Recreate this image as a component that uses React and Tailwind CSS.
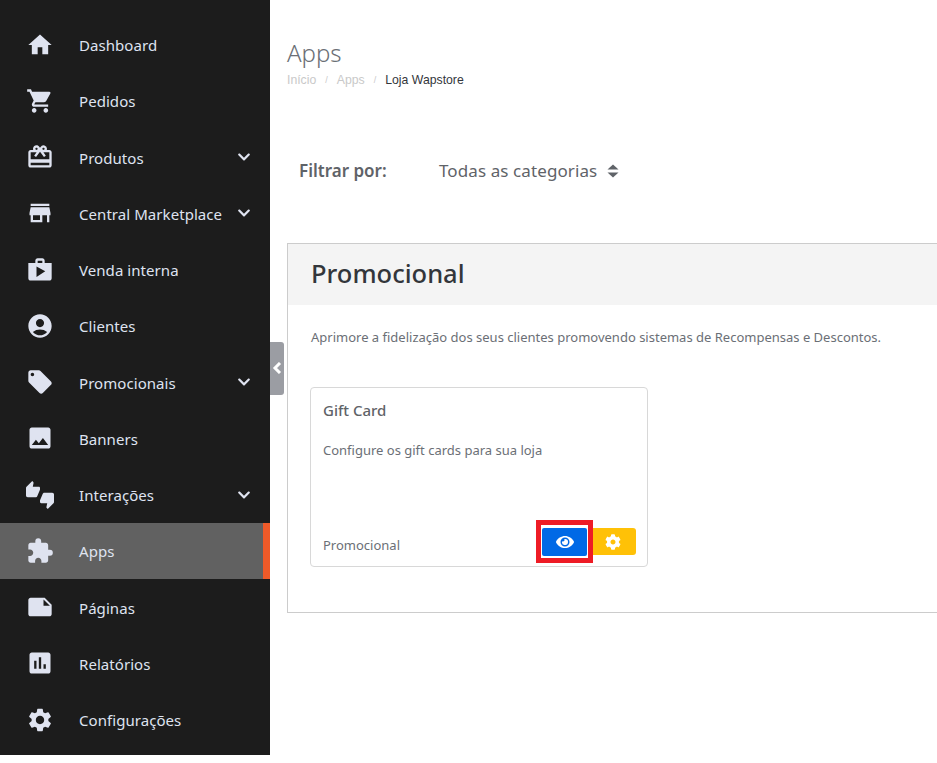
import {
  MdHome,
  MdShoppingCart,
  MdRedeem,
  MdStore,
  MdShop,
  MdAccountCircle,
  MdLocalOffer,
  MdImage,
  MdThumbsUpDown,
  MdExtension,
  MdNote,
  MdAssessment,
  MdSettings,
} from "react-icons/md";
import { FaChevronDown, FaEye, FaCog } from "react-icons/fa";

const menu = [
  { label: "Dashboard", icon: MdHome },
  { label: "Pedidos", icon: MdShoppingCart },
  { label: "Produtos", icon: MdRedeem, sub: true },
  { label: "Central Marketplace", icon: MdStore, sub: true },
  { label: "Venda interna", icon: MdShop },
  { label: "Clientes", icon: MdAccountCircle },
  { label: "Promocionais", icon: MdLocalOffer, sub: true },
  { label: "Banners", icon: MdImage },
  { label: "Interações", icon: MdThumbsUpDown, sub: true },
  { label: "Apps", icon: MdExtension, active: true },
  { label: "Páginas", icon: MdNote },
  { label: "Relatórios", icon: MdAssessment },
  { label: "Configurações", icon: MdSettings },
];

function MenuItem({ item }) {
  const Icon = item.icon;
  return (
    <div
      className={
        "flex items-center h-[56.25px] pl-[26px] text-[15px] text-[#dfe3f0] " +
        (item.active ? "bg-[#616161] border-r-[7px] border-[#ee5a29] pr-[12px]" : "pr-[19px]")
      }
    >
      <Icon className="w-[28px] h-[28px] shrink-0" />
      <span className="ml-[25px] pt-[1.45px] flex-1 whitespace-nowrap tracking-[0.06px]">{item.label}</span>
      {item.sub && <FaChevronDown className="w-[14px] h-[14px] shrink-0" />}
    </div>
  );
}

export default function App() {
  return (
    <div className="relative flex w-[937px] h-[763px] overflow-hidden bg-white font-['Noto_Sans',sans-serif]">
      {/* Sidebar */}
      <aside className="w-[270px] h-[755px] shrink-0 bg-[#1c1c1c] pt-[16.5px]">
        {menu.map((item) => (
          <MenuItem key={item.label} item={item} />
        ))}
      </aside>

      <div className="absolute left-[270px] top-[342px] w-[14px] h-[53px] bg-[#9b9da3] rounded-r-[3px] flex items-center justify-center text-white">
        <svg viewBox="0 0 10 12" className="w-[10px] h-[12px] -mt-[2px]" fill="none" stroke="currentColor" strokeWidth="3">
          <path d="M8 1 L3 6 L8 11" />
        </svg>
      </div>

      {/* Content */}
      <main className="flex-1 min-w-0 pl-[17px]">
        <h1 className="mt-[37px] text-[24px] leading-[32px] font-light text-[#6b6f76]">Apps</h1>
        <div className="mt-[3px] flex items-center text-[12.25px] leading-[16px] font-['Liberation_Sans',sans-serif]">
          <span className="text-[#c9c9c9]">Início</span>
          <span className="mx-[9px] text-[#c9c9c9] text-[9px]">/</span>
          <span className="text-[#c9c9c9]">Apps</span>
          <span className="mx-[9px] text-[#c9c9c9] text-[9px]">/</span>
          <span className="text-[#33363b]">Loja Wapstore</span>
        </div>

        <div className="mt-[69px] ml-[12px] flex items-center text-[#5f6368] h-[28px]">
          <span className="text-[17px] font-semibold w-[140px]">Filtrar por:</span>
          <span className="text-[17px] tracking-[0.1px]">Todas as categorias</span>
          <svg viewBox="0 0 12 14" className="ml-[10px] w-[12px] h-[14px]" fill="currentColor">
            <path d="M6 0.5 L11.5 5.5 H0.5 Z" />
            <path d="M0.5 8.5 H11.5 L6 13.5 Z" />
          </svg>
        </div>

        <section className="mt-[58px] w-[760px] h-[370px] border border-[#cccccc]">
          <div className="h-[61px] bg-[#f4f4f4] pl-[23px] flex items-center">
            <h2 className="text-[25.5px] -mt-[2px] font-medium text-[#33363b]">Promocional</h2>
          </div>
          <p className="mt-[22px] pl-[23px] text-[13px] leading-[20px] text-[#6b6f76]">
            Aprimore a fidelização dos seus clientes promovendo sistemas de Recompensas e Descontos.
          </p>

          <div className="mt-[40px] ml-[22px] w-[338px] h-[180px] border border-[#d8d8d8] rounded-[4px] flex flex-col px-[12px] pt-[11px] pb-[10px]">
            <h3 className="text-[15px] leading-[22px] font-medium text-[#5f6368]">Gift Card</h3>
            <p className="mt-[19px] text-[13px] leading-[20px] text-[#6b6f76]">Configure os gift cards para sua loja</p>
            <div className="mt-auto flex items-center justify-between">
              <span className="pt-[8px] text-[13px] text-[#6b6f76]">Promocional</span>
              <div className="flex items-start -mr-px">
                <div className="relative w-[45px] h-[28px] mr-[6px] bg-[#0069e6] rounded-[2px] flex items-center justify-center text-white">
                  <FaEye className="w-[18px] h-[16px]" />
                  <span className="absolute left-[-6px] top-[-8px] w-[57px] h-[43px] border-[5px] border-[#ee1c25]" />
                </div>
                <div className="w-[43px] h-[27px] pr-[3px] bg-[#ffc107] rounded-r-[3px] flex items-center justify-center text-white">
                  <FaCog className="w-[16px] h-[16px]" />
                </div>
              </div>
            </div>
          </div>
        </section>
      </main>
    </div>
  );
}
